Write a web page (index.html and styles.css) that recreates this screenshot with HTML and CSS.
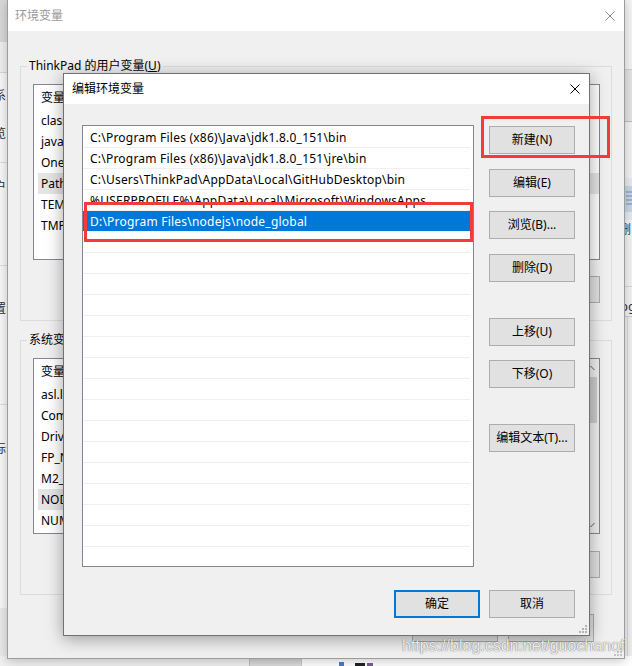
FILE: index.html
```html
<!DOCTYPE html>
<html lang="zh-CN">
<head>
<meta charset="utf-8">
<title>编辑环境变量</title>
<link rel="stylesheet" href="styles.css">
</head>
<body>
<div class="bg-left">
  <div class="bl-a"></div>
  <div class="bl-b"></div>
  <div class="bl-c"><div class="frag f1">系</div><div class="frag f2">览</div></div>
  <div class="bl-d"><div class="frag f3">户</div></div>
  <div class="bl-e"><div class="frag f4">置</div></div>
  <div class="bl-f"><div class="frag f5">标</div></div>
  <div class="bl-g"></div>
</div>
<div class="bg-right">
  <div class="br-a"></div>
  <div class="br-b"></div>
  <div class="br-c"></div>
  <div class="br-d"><svg class="doc" width="8" height="30" viewBox="0 0 8 30"><rect x="0" y="2" width="8" height="26" fill="#c9d6e6"/><path d="M1 8h7M1 12h7M1 16h7M1 20h7" stroke="#6f8fb8" stroke-width="1"/></svg></div>
  <div class="br-e"><div class="frag2">删</div><div class="arr">▾</div></div>
  <div class="br-f"><div class="frag3">pg</div></div>
  <div class="br-g"></div>
</div>
<div class="bg-bottom">
  <div class="bb-a"></div>
  <div class="bb-b"></div>
  <div class="bb-c"><span class="bb-icon"></span><span class="bb-dark"></span><span class="bb-txt"></span></div>
</div>

<div class="win outer">
  <div class="tb tb-inactive">
    <span class="tb-title">环境变量</span>
    <svg class="x" width="10" height="10" viewBox="0 0 10 10"><path d="M0.5 0.5L9.5 9.5M9.5 0.5L0.5 9.5" stroke="#8c8c8c" stroke-width="1"/></svg>
  </div>
  <div class="ob">
    <fieldset class="grp grp-user">
      <legend>ThinkPad 的用户变量(<u>U</u>)</legend>
      <div class="lv">
        <div class="lv-main">
          <div class="lv-head"><span class="c1">变量</span><span>值</span></div>
          <div class="lv-row">classpath</div>
          <div class="lv-row">java_home</div>
          <div class="lv-row">OneDrive</div>
          <div class="lv-row sel">Path</div>
          <div class="lv-row">TEMP</div>
          <div class="lv-row">TMP</div>
        </div>
      </div>
      <div class="brow">
        <button class="btn">新建(N)...</button>
        <button class="btn">编辑(E)...</button>
        <button class="btn">删除(D)</button>
      </div>
    </fieldset>
    <fieldset class="grp grp-sys">
      <legend>系统变量(<u>S</u>)</legend>
      <div class="lv">
        <div class="lv-main">
          <div class="lv-head"><span class="c1">变量</span><span>值</span></div>
          <div class="lv-row">asl.log</div>
          <div class="lv-row">ComSpec</div>
          <div class="lv-row">DriverData</div>
          <div class="lv-row">FP_NO_HOST_CHECK</div>
          <div class="lv-row">M2_HOME</div>
          <div class="lv-row sel">NODE_PATH</div>
          <div class="lv-row">NUMBER_OF_PROCESSORS</div>
        </div>
        <div class="vsb">
          <div class="vsb-btn"><svg width="9" height="6" viewBox="0 0 9 6"><path d="M0.5 5L4.5 1L8.5 5" fill="none" stroke="#606060" stroke-width="1"/></svg></div>
          <div class="vsb-track"><div class="vsb-thumb"></div></div>
          <div class="vsb-btn"><svg width="9" height="6" viewBox="0 0 9 6"><path d="M0.5 1L4.5 5L8.5 1" fill="none" stroke="#606060" stroke-width="1"/></svg></div>
        </div>
      </div>
      <div class="brow brow-sys">
        <button class="btn">新建(W)...</button>
        <button class="btn">编辑(I)...</button>
        <button class="btn">删除(L)</button>
      </div>
    </fieldset>
    <div class="brow brow-ok">
      <button class="btn btn-lg">确定</button>
      <button class="btn btn-lg">取消</button>
    </div>
  </div>
  <svg class="grip" width="8" height="8" viewBox="0 0 8 8"><path d="M6 0h2v2h-2zM3 3h2v2h-2zM6 3h2v2h-2zM0 6h2v2h-2zM3 6h2v2h-2zM6 6h2v2h-2z" fill="#c4c4c4"/></svg>
</div>

<div class="win inner">
  <div class="tb">
    <span class="tb-title">编辑环境变量</span>
    <svg class="x" width="10" height="10" viewBox="0 0 10 10"><path d="M0.5 0.5L9.5 9.5M9.5 0.5L0.5 9.5" stroke="#000" stroke-width="1"/></svg>
  </div>
  <div class="ib">
    <div class="lb">
      <div class="lb-row">C:\Program Files (x86)\Java\jdk1.8.0_151\bin</div>
      <div class="lb-row">C:\Program Files (x86)\Java\jdk1.8.0_151\jre\bin</div>
      <div class="lb-row">C:\Users\ThinkPad\AppData\Local\GitHubDesktop\bin</div>
      <div class="lb-row">%USERPROFILE%\AppData\Local\Microsoft\WindowsApps</div>
      <div class="lb-row sel">D:\Program Files\nodejs\node_global</div>
      <div class="lb-row"></div><div class="lb-row"></div><div class="lb-row"></div><div class="lb-row"></div>
      <div class="lb-row"></div><div class="lb-row"></div><div class="lb-row"></div><div class="lb-row"></div>
      <div class="lb-row"></div><div class="lb-row"></div><div class="lb-row"></div><div class="lb-row"></div>
      <div class="lb-row"></div><div class="lb-row"></div><div class="lb-row"></div><div class="lb-row"></div>
    </div>
    <div class="bcol">
      <button class="btn btn-lg b-new">新建(N)</button>
      <button class="btn btn-lg b-edit">编辑(E)</button>
      <button class="btn btn-lg b-browse">浏览(B)...</button>
      <button class="btn btn-lg b-del">删除(D)</button>
      <button class="btn btn-lg b-up">上移(U)</button>
      <button class="btn btn-lg b-down">下移(O)</button>
      <button class="btn btn-lg b-text">编辑文本(T)...</button>
    </div>
    <div class="ibot">
      <button class="btn btn-lg btn-def">确定</button>
      <button class="btn btn-lg">取消</button>
    </div>
  </div>
  <svg class="grip" width="8" height="8" viewBox="0 0 8 8"><path d="M6 0h2v2h-2zM3 3h2v2h-2zM6 3h2v2h-2zM0 6h2v2h-2zM3 6h2v2h-2zM6 6h2v2h-2z" fill="#b4b4b4"/></svg>
</div>

<div class="mark mark-row"></div>
<div class="mark mark-btn"></div>
<div class="watermark">https://blog.csdn.net/guochanof</div>
</body>
</html>
```
FILE: styles.css
```css
* { box-sizing: border-box; }
html, body { margin: 0; padding: 0; }
body {
  width: 632px;
  height: 666px;
  overflow: hidden;
  position: relative;
  background: #f0f0f0;
  font-family: "Noto Sans", "Noto Sans CJK SC", sans-serif;
  font-size: 12px;
  color: #000;
}

/* ---------- background windows ---------- */
.bg-left {
  position: absolute; left: 0; top: 0;
  width: 8px; height: 666px;
  overflow: hidden;
  background: #ececec;
  display: flex; flex-direction: column;
}
.bl-a { height: 42px; background: #d8d8d8; }
.bl-b { height: 31px; background: #efefef; border-bottom: 1px solid #d6d6d6; }
.bl-c { height: 90px; background: #f7f7f7; border-bottom: 1px solid #dcdcdc; padding-top: 15px; }
.bl-d { height: 103px; background: #f7f7f7; border-bottom: 1px solid #dcdcdc; padding-top: 16px; }
.bl-e { height: 139px; background: #f7f7f7; border-bottom: 1px solid #dcdcdc; padding-top: 35px; }
.bl-f { height: 203px; background: #f7f7f7; padding-top: 36px; }
.bl-g { flex: 1; background: #e9e9e9; }
.frag { line-height: 16px; margin-left: -6px; color: #2b2b3b; }
.f2 { margin-top: 22px; }

.bg-right {
  position: absolute; left: 624px; top: 0;
  width: 8px; height: 666px;
  overflow: hidden;
  background: #f0f0f0;
  display: flex; flex-direction: column;
}
.br-a { height: 70px; background: #f4f4f4; border-bottom: 1px solid #d2d2d2; }
.br-b { height: 52px; background: #e4e4e4; border-bottom: 1px solid #bdbdbd; }
.br-c { height: 56px; background: #f3f3f3; }
.br-d { height: 42px; background: #e6ebf2; padding-top: 6px; padding-left: 1px; }
.doc { display: block; }
.br-e { height: 67px; background: #f3f3f3; border-bottom: 1px solid #d6d6d6; padding-top: 2px; }
.frag2 { line-height: 16px; margin-left: -5px; color: #333; }
.arr { font-size: 8px; line-height: 8px; color: #888; margin-left: -3px; }
.br-f { height: 30px; background: #f3f3f3; border-bottom: 1px solid #cfcfcf; padding-top: 11px; }
.frag3 { line-height: 16px; margin-left: -4px; color: #333; font-size: 13px; }
.br-g { flex: 1; background: #efefef; border-left: 3px solid #f0f0f0; box-shadow: inset 1px 0 0 #d8d8d8; }

.bg-bottom {
  position: absolute; left: 0; top: 656px;
  width: 632px; height: 10px;
  display: flex;
}
.bb-a { width: 249px; background: #f0f0f0; }
.bb-b { width: 53px; background: linear-gradient(#cfcfcf, #dcdcdc); border-left: 1px solid #bdbdbd; border-right: 1px solid #c8c8c8; }
.bb-c { flex: 1; background: #fff; display: flex; align-items: flex-end; padding-left: 37px; gap: 12px; }
.bb-icon { width: 5px; height: 4px; background: #3b7fd4; }
.bb-dark { width: 10px; height: 3px; background: #222; margin-left: -1px; }
.bb-txt { width: 6px; height: 3px; background: #7a5a9a; margin-left: -10px; }

/* ---------- windows ---------- */
.win {
  position: absolute;
  background: #f0f0f0;
  display: flex; flex-direction: column;
}
.tb {
  height: 30px;
  flex: none;
  background: #fff;
  display: flex; align-items: center; justify-content: space-between;
  padding-left: 8px; padding-right: 9px;
}
.tb-title { line-height: 16px; }
.tb-inactive { height: 31px; padding-left: 7px; }
.tb-inactive .tb-title { color: #9a9a9a; }
.x { display: block; }

.outer {
  left: 7px; top: -1px;
  width: 618px; height: 660px;
  border: 1px solid #9c9c9c;
  box-shadow: 0 2px 10px rgba(0,0,0,.22);
}
.ob { padding: 0 12px; }

.grp {
  margin: 0;
  border: 1px solid #dcdcdc;
  padding: 10px 11px 17px 12px;
  min-width: 0;
}
.grp legend {
  padding: 0 2px;
  margin-left: -6px;
  line-height: 16px;
  color: #000;
}
.grp-user { margin-top: 27px; }
.grp-sys { margin-top: 11px; padding-bottom: 16px; }

.lv {
  height: 176px;
  background: #fff;
  border: 1px solid #828790;
  overflow: hidden;
  display: flex;
}
.lv-main { flex: 1; }
.lv-head { height: 25px; line-height: 25px; padding-left: 7px; display: flex; }
.lv-head .c1 { width: 160px; }
.lv-row { height: 21px; line-height: 21px; margin-left: 4px; padding-left: 3px; }
.lv-row.sel { background: #e5e5e5; }

.vsb { width: 17px; background: #f0f0f0; display: flex; flex-direction: column; }
.vsb-btn { height: 17px; display: flex; align-items: center; justify-content: center; }
.vsb-btn svg { display: block; }
.vsb-track { flex: 1; padding: 1px 1px; }
.vsb-thumb { height: 46px; background: #cdcdcd; margin: 0 1px; }

.brow { display: flex; justify-content: flex-end; gap: 10px; margin-top: 16px; }
.brow-sys { margin-top: 17px; }
.brow-ok { margin-top: 19px; margin-right: 18px; }

.btn {
  width: 86px; height: 27px;
  margin: 0; padding: 0;
  background: #e1e1e1;
  border: 1px solid #adadad;
  font-family: inherit; font-size: 12px; color: #000;
  line-height: 16px;
}
.btn-lg { height: 28px; }
.btn-def { border: 2px solid #0078d7; }

.inner {
  left: 63px; top: 73px;
  width: 527px; height: 563px;
  border: 1px solid #717171;
  box-shadow: 0 3px 16px rgba(0,0,0,.36);
}
.ib {
  flex: 1;
  display: grid;
  grid-template-columns: 392px 86px;
  grid-template-rows: 442px 28px;
  column-gap: 15px;
  row-gap: 23px;
  padding: 21px 14px 17px 18px;
}
.lb {
  background: #fff;
  border: 1px solid #828790;
  padding: 1px 3px 0 0;
  overflow: hidden;
}
.lb-row {
  height: 21px;
  line-height: 21px;
  border-bottom: 1px solid #efefef;
  padding-left: 7px;
  letter-spacing: 0.22px;
  white-space: nowrap;
  overflow: hidden;
}
.lb-row.sel { background: #0078d7; color: #fff; }

.bcol { display: flex; flex-direction: column; }
.b-new { margin-top: 1px; }
.b-edit { margin-top: 15px; }
.b-browse { margin-top: 14px; }
.b-del { margin-top: 15px; }
.b-up { margin-top: 36px; }
.b-down { margin-top: 14px; }
.b-text { margin-top: 36px; }

.ibot { grid-column: 1 / 3; display: flex; justify-content: flex-end; gap: 9px; }

.grip { position: absolute; right: 2px; bottom: 2px; }

/* ---------- annotations ---------- */
.mark { position: absolute; border: 3px solid #f33b3b; }
.mark-row { left: 84px; top: 202px; width: 389px; height: 40px; }
.mark-btn { left: 481px; top: 116px; width: 129px; height: 42px; }

.watermark {
  position: absolute; left: 402px; top: 637px;
  font-family: "Liberation Sans", Arial, sans-serif;
  font-size: 16px; line-height: 18px;
  color: rgba(255,255,255,.9);
  text-shadow: 0 0 1px rgba(0,0,0,.5), 0 0 1px rgba(0,0,0,.3);
  white-space: nowrap;
}
```
